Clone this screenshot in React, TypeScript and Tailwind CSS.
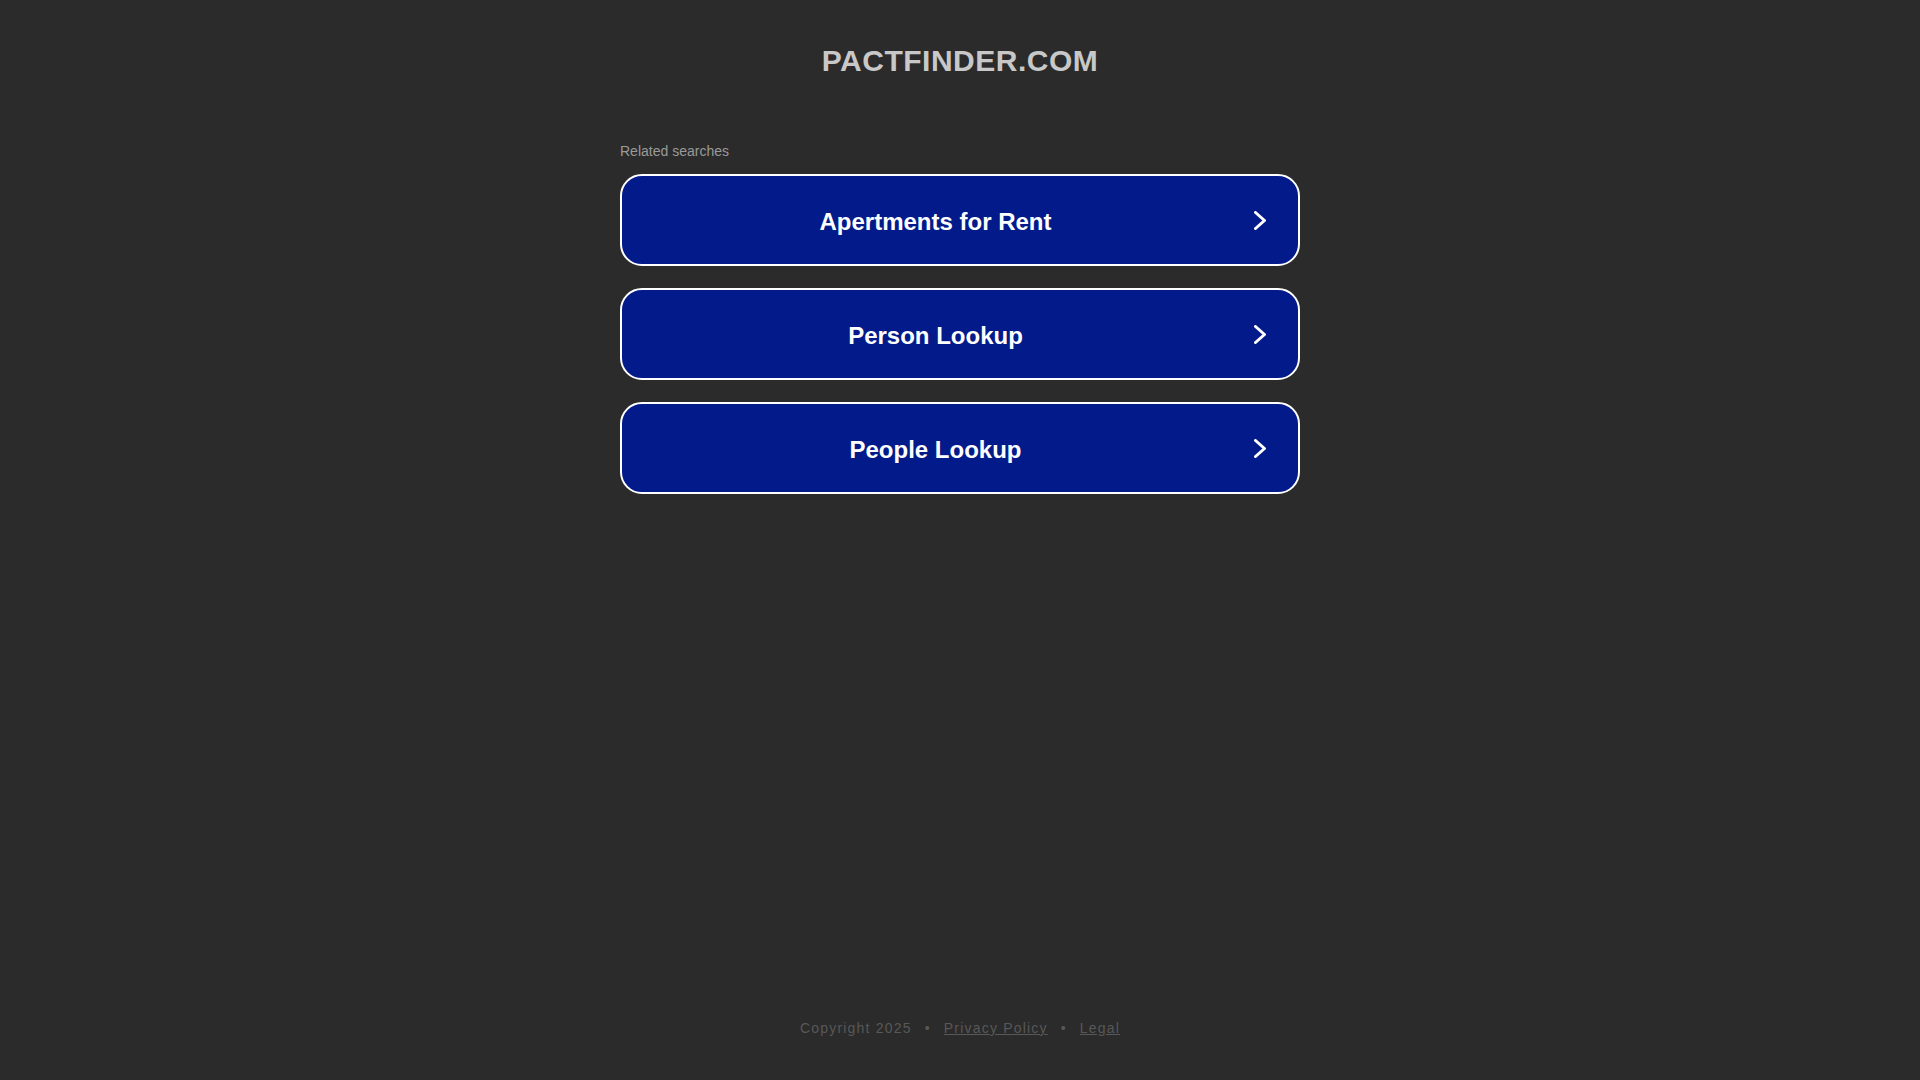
import React from "react";

const items = ["Apertments for Rent", "Person Lookup", "People Lookup"];

function Chevron() {
  return (
    <svg width="12" height="19" viewBox="0 0 12 19" className="ml-[5px] mr-[32px] shrink-0">
      <polyline
        points="1.5,1.5 10.5,9.5 1.5,17.5"
        fill="none"
        stroke="#ffffff"
        strokeWidth="3"
        strokeLinecap="round"
        strokeLinejoin="round"
      />
    </svg>
  );
}

export default function App() {
  return (
    <div
      className="min-h-screen bg-[#2b2b2b] flex flex-col"
      style={{ fontFamily: '"Liberation Sans", Arial, Helvetica, sans-serif' }}
    >
      <div className="pt-[44px] text-center">
        <h1 className="text-[30px] leading-[34px] font-bold tracking-[0.5px] text-[#c8c8c8]">PACTFINDER.COM</h1>
      </div>
      <div className="w-[680px] mx-auto mt-[65px]">
        <div className="text-[14px] leading-[16px] text-[#9a9a9a] pb-[15px]">Related searches</div>
        <div className="flex flex-col gap-[22px]">
          {items.map((t) => (
            <a
              key={t}
              href="#"
              className="h-[92px] rounded-[22px] border-2 border-white bg-[#021a8a] flex items-center"
            >
              <span className="flex-1 text-center pt-[3px] text-[24px] leading-[28px] font-bold text-white">{t}</span>
              <Chevron />
            </a>
          ))}
        </div>
      </div>
      <div className="mt-auto pb-[44px] flex justify-center text-[14px] leading-[16px] tracking-[1.2px] text-[#585858]">
        <span>Copyright 2025</span>
        <span className="mx-[13px]">•</span>
        <a href="#" className="underline">Privacy Policy</a>
        <span className="mx-[13px]">•</span>
        <a href="#" className="underline">Legal</a>
      </div>
    </div>
  );
}
